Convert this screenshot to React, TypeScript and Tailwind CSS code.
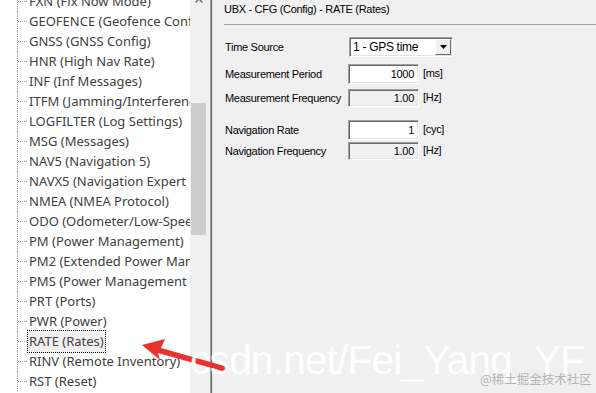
import React from "react";

const TREE_ITEMS = [
  "FXN (Fix Now Mode)",
  "GEOFENCE (Geofence Config)",
  "GNSS (GNSS Config)",
  "HNR (High Nav Rate)",
  "INF (Inf Messages)",
  "ITFM (Jamming/Interference Monitor)",
  "LOGFILTER (Log Settings)",
  "MSG (Messages)",
  "NAV5 (Navigation 5)",
  "NAVX5 (Navigation Expert 5)",
  "NMEA (NMEA Protocol)",
  "ODO (Odometer/Low-Speed COG Filter)",
  "PM (Power Management)",
  "PM2 (Extended Power Management)",
  "PMS (Power Management Setup)",
  "PRT (Ports)",
  "PWR (Power)",
  "RATE (Rates)",
  "RINV (Remote Inventory)",
  "RST (Reset)",
];

const SELECTED = "RATE (Rates)";

// sunken win32 edit box
const sunken =
  "border border-t-[#a0a0a0] border-l-[#a0a0a0] border-b-white border-r-white shadow-[inset_1px_1px_0_#696969,inset_-1px_-1px_0_#e3e3e3]";

const TreeRow = ({ label }: { label: string }) => {
  const selected = label === SELECTED;
  return (
    <div className="flex h-[20px] shrink-0">
      <div className="w-[17px] shrink-0" />
      <div className="w-[10px] shrink-0 flex items-center border-l border-dotted border-[#a0a0a0]">
        <div className="w-[9px] border-t border-dotted border-[#a0a0a0]" />
      </div>
      <div className="flex items-center">
        <span
          className={`leading-none px-[1px] py-[4px] ${
            selected ? "border border-dotted border-black bg-[#f0f0f0]" : "border border-transparent"
          }`}
        >
          {label}
        </span>
      </div>
    </div>
  );
};

const FieldRow = ({
  label,
  value,
  unit,
  disabled,
  className,
}: {
  label: string;
  value: string;
  unit: string;
  disabled?: boolean;
  className?: string;
}) => (
  <div className={`flex items-center ${className ?? ""}`}>
    <div className="w-[124px] shrink-0 pl-[1px]">{label}</div>
    <div
      className={`w-[71px] flex items-center justify-end pr-[4px] ${sunken} ${
        disabled ? "h-[18px] bg-[#f0f0f0]" : "h-[20px] bg-white"
      }`}
    >
      {value}
    </div>
    <div className="ml-[4px] -mt-[2px]">{unit}</div>
  </div>
);

export default function App() {
  return (
    <div className="relative w-[596px] h-[393px] overflow-hidden flex bg-[#f0f0f0] select-none">
      {/* tree */}
      <div className="w-[190px] shrink-0 bg-white overflow-hidden whitespace-nowrap text-[13px] text-[#404040] font-['Noto_Sans',sans-serif]">
        <div className="-mt-[9px] flex flex-col">
          {TREE_ITEMS.map((item) => (
            <TreeRow key={item} label={item} />
          ))}
        </div>
      </div>

      {/* scrollbar */}
      <div className="w-[17px] shrink-0 flex flex-col bg-[#f0f0f0]">
        <div className="-mt-[8px] h-[17px] flex items-center justify-center">
          <svg width="8" height="5" viewBox="0 0 8 5">
            <path d="M0.5 4.5 L4 1 L7.5 4.5" fill="none" stroke="#606060" strokeWidth="1.3" />
          </svg>
        </div>
        <div className="mt-[94px] mx-[1px] h-[132px] bg-[#cdcdcd]" />
      </div>

      {/* splitter */}
      <div className="w-[3px] shrink-0 bg-[#f0f0f0]" />
      <div className="w-[1px] shrink-0 bg-[#a0a0a0]" />
      <div className="w-[1px] shrink-0 bg-[#696969]" />
      <div className="w-[1px] shrink-0 bg-[#e3e3e3]" />

      {/* config panel */}
      <div className="flex-1 flex flex-col pl-[11px] text-[11px] tracking-[-0.3px] text-black font-['Liberation_Sans',Arial,sans-serif]">
        <div className="h-[18px] flex items-center">UBX - CFG (Config) - RATE (Rates)</div>
        <div className="mt-[6px] border-t border-[#a0a0a0]" />

        <div className="mt-[12px] flex items-center">
          <div className="w-[125px] shrink-0 pl-[1px]">Time Source</div>
          <div className={`w-[104px] h-[20px] bg-white flex items-center justify-between pl-[3px] pr-[1px] ${sunken}`}>
            <span className="text-[12px]">1 - GPS time</span>
            <div className="w-[16px] h-[16px] flex items-center justify-center bg-[#f0f0f0] border border-t-white border-l-white border-b-[#696969] border-r-[#696969]">
              <svg width="7" height="4" viewBox="0 0 7 4">
                <path d="M0 0 H7 L3.5 4 Z" fill="#000" />
              </svg>
            </div>
          </div>
        </div>

        <FieldRow className="mt-[7px]" label="Measurement Period" value="1000" unit="[ms]" />
        <FieldRow className="mt-[5px]" label="Measurement Frequency" value="1.00" unit="[Hz]" disabled />
        <FieldRow className="mt-[13px]" label="Navigation Rate" value="1" unit="[cyc]" />
        <FieldRow className="mt-[2px]" label="Navigation Frequency" value="1.00" unit="[Hz]" disabled />
      </div>

      {/* red annotation arrow */}
      <svg className="absolute left-0 top-0 pointer-events-none" width="596" height="393" viewBox="0 0 596 393">
        <polygon
          points="142,345 165,339 161,348 228,367 226,372 158,353 160,360"
          fill="#e8322f"
        />
      </svg>

      {/* watermarks */}
      <div className="absolute left-[190px] top-[340px] pointer-events-none whitespace-nowrap text-[41px] leading-none tracking-[-1px] text-white/90 font-['Liberation_Sans',Arial,sans-serif]">
        csdn.net/Fei_Yang_YF
      </div>
      <div className="absolute left-[480px] top-[373px] pointer-events-none whitespace-nowrap text-[12.5px] leading-none text-[#b4b4b4] font-['Noto_Sans_CJK_SC',sans-serif]">
        @稀土掘金技术社区
      </div>
    </div>
  );
}
